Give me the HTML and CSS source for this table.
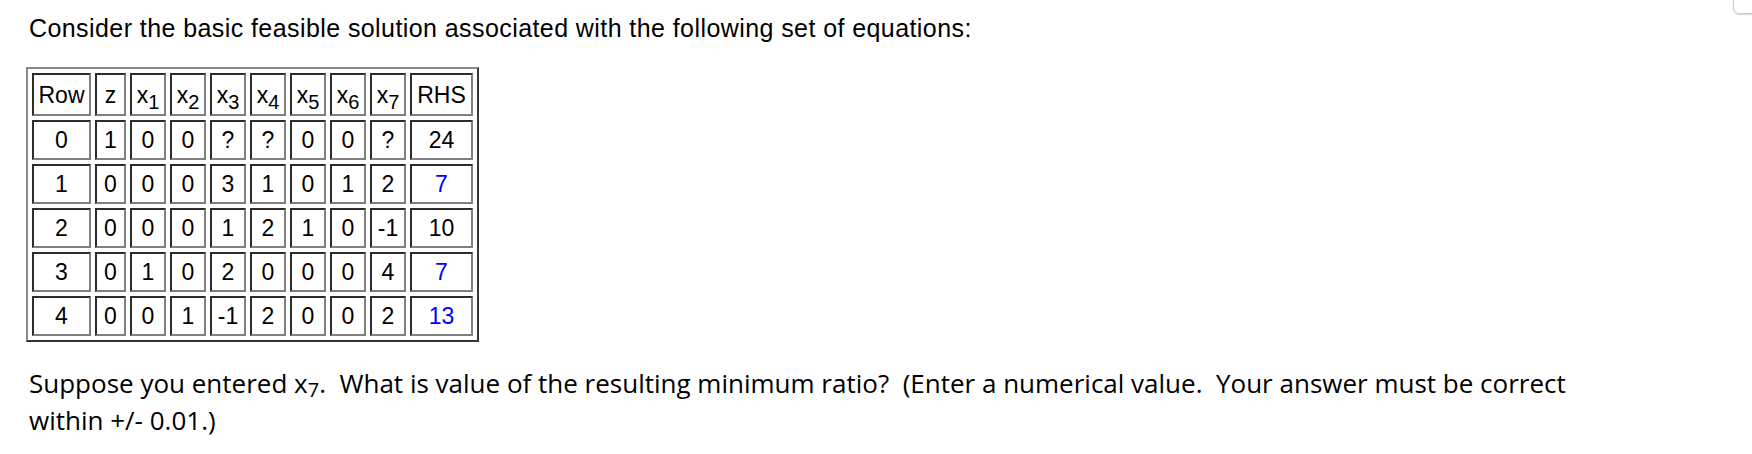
FILE: index.html
```html
<!DOCTYPE html>
<html>
<head>
<meta charset="utf-8">
<link rel="stylesheet" href="styles.css">
</head>
<body>
<div class="corner"></div>
<div class="page">
  <p class="intro">Consider the basic feasible solution associated with the following set of equations:</p>
  <table class="tab">
    <tr class="head"><td class="c-row">Row</td><td class="c-z">z</td><td class="c-x">x<sub>1</sub></td><td class="c-x">x<sub>2</sub></td><td class="c-x">x<sub>3</sub></td><td class="c-x">x<sub>4</sub></td><td class="c-x">x<sub>5</sub></td><td class="c-x">x<sub>6</sub></td><td class="c-x">x<sub>7</sub></td><td class="c-rhs">RHS</td></tr>
    <tr><td>0</td><td>1</td><td>0</td><td>0</td><td>?</td><td>?</td><td>0</td><td>0</td><td>?</td><td>24</td></tr>
    <tr><td>1</td><td>0</td><td>0</td><td>0</td><td>3</td><td>1</td><td>0</td><td>1</td><td>2</td><td class="blue">7</td></tr>
    <tr><td>2</td><td>0</td><td>0</td><td>0</td><td>1</td><td>2</td><td>1</td><td>0</td><td>-1</td><td>10</td></tr>
    <tr><td>3</td><td>0</td><td>1</td><td>0</td><td>2</td><td>0</td><td>0</td><td>0</td><td>4</td><td class="blue">7</td></tr>
    <tr><td>4</td><td>0</td><td>0</td><td>1</td><td>-1</td><td>2</td><td>0</td><td>0</td><td>2</td><td class="blue">13</td></tr>
  </table>
  <p class="question">Suppose you entered x<sub>7</sub>.&nbsp; What is value of the resulting minimum ratio?&nbsp; (Enter a numerical value.&nbsp; Your answer must be correct within +/- 0.01.)</p>
</div>
</body>
</html>
```

FILE: styles.css
```css
html, body {
  margin: 0;
  padding: 0;
  background: #ffffff;
}
.page {
  padding: 0 0 0 29px;
  width: 1560px;
}
.intro {
  margin: 0;
  padding-top: 14px;
  font-family: "Liberation Sans", Arial, sans-serif;
  font-size: 25px;
  letter-spacing: 0.42px;
  line-height: 28px;
  color: #000;
}
.tab {
  margin-top: 25px;
  margin-left: -3px;
  border: 2px outset #8a8a8a;
  border-spacing: 4px;
  font-family: "Liberation Sans", Arial, sans-serif;
  font-size: 23px;
  color: #000;
}
.tab td {
  border: 2px inset #808080;
  padding: 0;
  height: 36px;
  text-align: center;
  line-height: 26px;
}
.tab .head td {
  height: 39px;
}
.tab .c-row { width: 55px; }
.tab .c-z { width: 27px; }
.tab .c-x { width: 32px; }
.tab .c-rhs { width: 59px; }
.tab sub {
  font-size: 20px;
  vertical-align: -6px;
  line-height: 0;
}
.tab .blue {
  color: #0000ff;
}
.question {
  margin: 23px 0 0 0;
  font-family: "Open Sans", sans-serif;
  font-size: 26px;
  line-height: 37px;
  color: #000;
}
.question sub {
  font-size: 20px;
  vertical-align: -4px;
  line-height: 0;
}
.corner {
  position: absolute;
  top: -10px;
  left: 1733px;
  width: 40px;
  height: 22px;
  border: 1px solid #c8c8c8;
  border-radius: 6px;
  box-shadow: 0 1px 1px #d8d8d8;
}
```
